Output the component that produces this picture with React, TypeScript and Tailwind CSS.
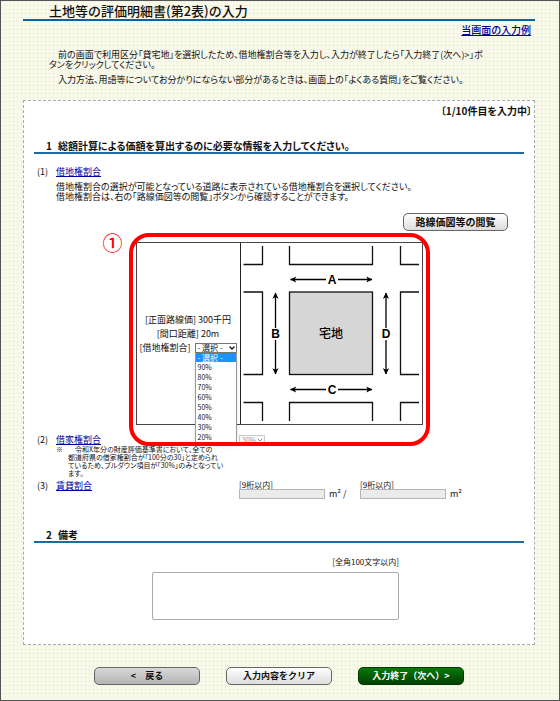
import { ChevronDown } from 'lucide-react';
import type { ReactNode } from 'react';

const rates = ['90%', '80%', '70%', '60%', '50%', '40%', '30%', '20%'];

function SectionTitle({ number, children }: { number: string; children: ReactNode }) {
    return (
        <h2 className="mx-2.5 flex gap-1.5 border-b-2 border-[#1f6a9f] pl-3 text-[10px] leading-3 font-bold">
            <span>{number}</span>
            <span>{children}</span>
        </h2>
    );
}

function ItemLink({ children }: { children: ReactNode }) {
    return (
        <a href="#" className="text-[#0000a0] underline">
            {children}
        </a>
    );
}

function AreaField({ id, suffix }: { id: string; suffix: string }) {
    return (
        <div>
            <label htmlFor={id} className="block text-[8px] leading-[9px]">
                [9桁以内]
            </label>
            <div className="flex items-center gap-1 text-[9px] leading-[10px]">
                <input id={id} disabled className="h-2.5 w-[86px] border border-[#b5b5b5] bg-[#ebebeb]" />
                <span>{suffix}</span>
            </div>
        </div>
    );
}

function LotDiagram() {
    return (
        <svg viewBox="0 0 181 181" className="block w-full" role="img" aria-label="宅地">
            <defs>
                <marker id="arrow" viewBox="0 0 8 8" refX="7" refY="4" markerWidth="7" markerHeight="7" markerUnits="userSpaceOnUse" orient="auto-start-reverse">
                    <path d="M0.5 0.5 L7.5 4 L0.5 7.5 L2.2 4 Z" fill="#000" />
                </marker>
            </defs>
            <g fill="none" stroke="#111" strokeWidth="1.3">
                <path d="M2.5 21.5 H21.5 V3" />
                <path d="M48.5 3 V21.5 H131.5 V3" />
                <path d="M159.5 3 V21.5 H178" />
                <path d="M2.5 49 H21.5 V131.5 H2.5" />
                <path d="M178 49 H159.5 V131.5 H178" />
                <path d="M2.5 159.5 H21.5 V178" />
                <path d="M48.5 178 V159.5 H131.5 V178" />
                <path d="M159.5 178 V159.5 H178" />
                <rect x="48.5" y="49" width="83" height="82.5" fill="#d6d6d6" />
            </g>
            <g stroke="#000" strokeWidth="1.3">
                <path d="M85 36.5 H49.5" markerEnd="url(#arrow)" />
                <path d="M97 36.5 H131" markerEnd="url(#arrow)" />
                <path d="M85 146.5 H49.5" markerEnd="url(#arrow)" />
                <path d="M97 146.5 H131" markerEnd="url(#arrow)" />
                <path d="M34.5 85 V50" markerEnd="url(#arrow)" />
                <path d="M34.5 97 V131" markerEnd="url(#arrow)" />
                <path d="M145 85 V50" markerEnd="url(#arrow)" />
                <path d="M145 97 V131" markerEnd="url(#arrow)" />
            </g>
            <g fontSize="12" textAnchor="middle" fontWeight="bold" fontFamily="'Liberation Sans', sans-serif">
                <text x="91" y="40.5">A</text>
                <text x="34.5" y="95">B</text>
                <text x="91" y="150.5">C</text>
                <text x="145" y="95">D</text>
            </g>
            <text x="90" y="95" fontSize="12" fontWeight="500" textAnchor="middle">
                宅地
            </text>
        </svg>
    );
}

export default function App() {
    return (
        <div
            lang="ja"
            className="min-h-screen border border-[#555] bg-[#fbfbea] bg-[linear-gradient(#f1f2e8_1px,transparent_1px),linear-gradient(90deg,#f1f2e8_1px,transparent_1px)] bg-[size:4px_4px] pr-6 pl-[22px] font-['Noto_Sans_CJK_JP','Liberation_Sans',sans-serif] text-[9px] text-[#111] [font-feature-settings:'palt']"
        >
            <header>
                <h1 className="border-b-2 border-[#0a64a4] pt-px pl-[26px] text-[13px] leading-[17px] font-medium [font-feature-settings:normal]">
                    土地等の評価明細書(第2表)の入力
                </h1>
                <p className="mt-px pr-1 text-right text-[10px] leading-4 font-medium">
                    <ItemLink>当画面の入力例</ItemLink>
                </p>
            </header>

            <div className="mt-3 pl-[26px] leading-[10px]">
                <p>
                    {'　'}前の画面で利用区分「貸宅地」を選択したため、借地権割合等を入力し、入力が終了したら「入力終了(次へ)&gt;」ボ
                    <br />
                    タンをクリックしてください。
                </p>
                <p className="mt-[5px]">{'　'}入力方法、用語等についてお分かりにならない部分があるときは、画面上の「よくある質問」をご覧ください。</p>
            </div>

            <form onSubmit={(e) => e.preventDefault()}>
                <div className="mt-[15px] border border-dashed border-[#aaa] bg-white pb-6">
                    <p className="pt-0.5 pr-0.5 text-right text-[10px] leading-4 font-bold">〔1/10件目を入力中〕</p>

                    <div className="mt-[21px]">
                        <SectionTitle number="1">総額計算による価額を算出するのに必要な情報を入力してください。</SectionTitle>
                    </div>

                    <div className="mt-2.5 grid grid-cols-[19px_1fr] pl-[13px]">
                        <span className="leading-4">(1)</span>
                        <div>
                            <p className="leading-4">
                                <ItemLink>借地権割合</ItemLink>
                            </p>
                            <p className="mt-0.5 leading-[10px]">
                                借地権割合の選択が可能となっている道路に表示されている借地権割合を選択してください。
                                <br />
                                借地権割合は、右の「路線価図等の閲覧」ボタンから確認することができます。
                            </p>
                        </div>
                    </div>

                    <div className="mt-[11px] flex justify-end pr-[26px]">
                        <button type="button" className="h-[18px] w-[105px] rounded-[5px] border border-[#666] bg-linear-to-b from-white to-[#dcdcdc] text-[10px] leading-4 font-bold">
                            路線価図等の閲覧
                        </button>
                    </div>

                    <div className="relative z-10 mx-auto mt-[11px] grid w-fit grid-cols-[104px_181px] border border-[#444]">
                        <div className="flex flex-col items-center justify-center gap-1 border-r border-[#222] leading-[10px]">
                            <p>[正面路線価] 300千円</p>
                            <p>[間口距離] 20m</p>
                            <div className="flex items-center gap-1">
                                <label htmlFor="land-rate">[借地権割合]</label>
                                <div className="relative">
                                    <select id="land-rate" className="block h-2.5 w-[42px] appearance-none border border-[#777] bg-white pl-0.5 text-[8px] leading-2">
                                        <option>- 選択 -</option>
                                        {rates.map((rate) => (
                                            <option key={rate}>{rate}</option>
                                        ))}
                                    </select>
                                    <ChevronDown className="pointer-events-none absolute top-px right-px size-2" strokeWidth={4} />
                                    <ul role="listbox" aria-label="借地権割合" className="absolute top-full left-0 w-[42px] border border-t-0 border-[#999] bg-white text-[7px] leading-[10px] shadow-md">
                                        <li role="option" aria-selected="true" className="bg-[#1e90ff] pl-0.5 text-[8px] leading-[9px] text-white">
                                            - 選択 -
                                        </li>
                                        {rates.map((rate) => (
                                            <li key={rate} role="option" aria-selected="false" className="pl-0.5">
                                                {rate}
                                            </li>
                                        ))}
                                    </ul>
                                </div>
                            </div>
                        </div>
                        <LotDiagram />
                        <div className="pointer-events-none absolute -top-2.5 -right-2 -bottom-[22px] -left-2 rounded-[20px] border-4 border-[#f00]" />
                        <span className="absolute -top-3 -left-[34px] text-[20px] leading-6 font-medium text-[#f00]">①</span>
                    </div>

                    <div className="mt-2.5 grid grid-cols-[19px_183px_1fr] pl-[13px] leading-[10px]">
                        <span>(2)</span>
                        <div>
                            <p>
                                <ItemLink>借家権割合</ItemLink>
                            </p>
                            <div className="grid grid-cols-[12px_1fr] text-[7px] leading-2">
                                <span>※</span>
                                <p className="whitespace-nowrap">
                                    {'　'}令和X年分の財産評価基準書において、全ての
                                    <br />
                                    都道府県の借家権割合が「100分の30」と定められ
                                    <br />
                                    ているため、プルダウン項目が「30%」のみとなってい
                                    <br />
                                    ます。
                                </p>
                            </div>
                        </div>
                        <div className="relative h-2.5 w-[26px]">
                            <select disabled aria-label="借家権割合" className="block h-2.5 w-full appearance-none border border-[#ccc] bg-[#fafafa] pl-0.5 text-[7px] leading-2 text-[#999]">
                                <option>30%</option>
                            </select>
                            <ChevronDown className="pointer-events-none absolute top-px right-px size-2 text-[#999]" strokeWidth={3} />
                        </div>
                    </div>

                    <div className="mt-px grid grid-cols-[19px_183px_1fr] pl-[13px]">
                        <span className="leading-4">(3)</span>
                        <p className="leading-4">
                            <ItemLink>賃貸割合</ItemLink>
                        </p>
                        <div className="grid grid-cols-[121px_1fr] pt-0.5">
                            <AreaField id="rented-area" suffix="m² /" />
                            <AreaField id="total-area" suffix="m²" />
                        </div>
                    </div>

                    <div className="mt-[30px]">
                        <SectionTitle number="2">備考</SectionTitle>
                    </div>

                    <div className="mx-auto mt-[13px] flex w-[254px] flex-col pr-[7px]">
                        <label htmlFor="remarks" className="text-right text-[8px] leading-3">
                            [全角100文字以内]
                        </label>
                        <textarea id="remarks" className="mt-1 h-12 w-full resize-none rounded-xs border border-[#aaa] bg-white" />
                    </div>
                </div>

                <div className="mt-[22px] flex justify-center gap-[26px] text-[9px] leading-4 font-bold [font-feature-settings:normal]">
                    <button type="button" className="h-[18px] w-[106px] rounded-[5px] border border-[#666] bg-linear-to-b from-[#d8d8d8] to-[#b4b4b4]">
                        &lt;　戻る
                    </button>
                    <button type="reset" className="h-[18px] w-[106px] rounded-[5px] border border-[#666] bg-linear-to-b from-white to-[#dcdcdc]">
                        入力内容をクリア
                    </button>
                    <button type="submit" className="h-[18px] w-[106px] rounded-[5px] border border-[#033a03] bg-linear-to-b from-[#0a7a0a] to-[#034003] text-white">
                        入力終了（次へ）&gt;
                    </button>
                </div>
            </form>
        </div>
    );
}
